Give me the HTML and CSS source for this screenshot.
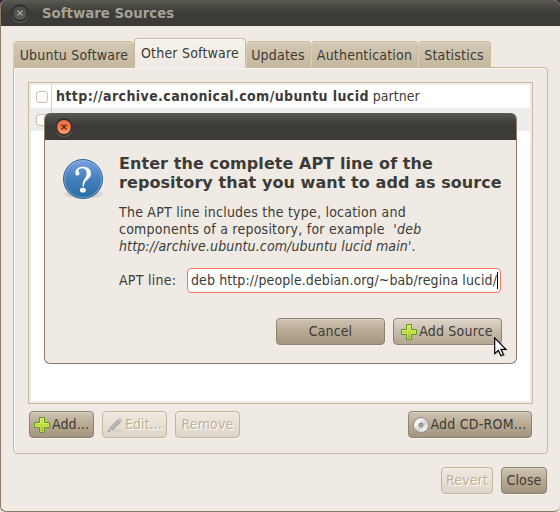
FILE: index.html
```html
<!DOCTYPE html>
<html lang="en">
<head>
<meta charset="utf-8">
<title>Software Sources</title>
<link rel="stylesheet" href="styles.css">
</head>
<body>
<svg class="defs" width="0" height="0" aria-hidden="true">
  <defs>
    <linearGradient id="green" x1="0" y1="0" x2="0" y2="1"><stop offset="0" stop-color="#d7e94e"/><stop offset=".5" stop-color="#c3dc3f"/><stop offset="1" stop-color="#8eb522"/></linearGradient>
    <linearGradient id="blue" x1="0" y1="0" x2="0" y2="1"><stop offset="0" stop-color="#7da2e0"/><stop offset=".5" stop-color="#447fbd"/><stop offset="1" stop-color="#286d9f"/></linearGradient>
    <linearGradient id="disc" x1="0" y1="0" x2="1" y2="1"><stop offset="0" stop-color="#c3c3c3"/><stop offset=".3" stop-color="#fafafa"/><stop offset=".55" stop-color="#cfcfcf"/><stop offset=".8" stop-color="#f6f6f6"/><stop offset="1" stop-color="#bcbcbc"/></linearGradient>
    <radialGradient id="shadow"><stop offset="0" stop-color="#8d8376" stop-opacity=".75"/><stop offset="1" stop-color="#8d8376" stop-opacity="0"/></radialGradient>
    <symbol id="plus" viewBox="0 0 16 16"><path d="M5.500.5h5v5h5v5h-5v5h-5v-5h-5v-5h5z" fill="url(#green)" stroke="#5f9b22"/><path d="M6.500 6.500v-5h3v5h5v3h-5v5h-3v-5h-5v-3z" fill="none" stroke="#e2f27a" stroke-opacity=".55"/></symbol>
  </defs>
</svg>
<div class="window">
  <div class="titlebar">
    <span class="close"><svg width="8" height="8" viewBox="0 0 8 8"><path d="M1.500 1.500l5 5m0-5l-5 5"/></svg></span>
    <span class="title">Software Sources</span>
  </div>
  <div class="body">
    <div class="tabs">
      <div class="tab t1"><span>Ubuntu Software</span></div>
      <div class="tab t2 active"><span>Other Software</span></div>
      <div class="tab t3"><span>Updates</span></div>
      <div class="tab t4"><span>Authentication</span></div>
      <div class="tab t5"><span>Statistics</span></div>
    </div>
    <div class="panel">
      <div class="list">
        <div class="row"><i class="check"></i><span class="cell"><b>http://archive.canonical.com/ubuntu lucid</b> partner</span></div>
        <div class="row alt"><i class="check"></i><span class="cell"></span></div>
      </div>
      <div class="actions">
        <button class="btn w65"><svg width="16" height="16"><use href="#plus"/></svg><span>Add...</span></button>
        <button class="btn w65 off"><svg width="16" height="16" viewBox="0 0 16 16"><ellipse cx="10" cy="13.500" rx="6" ry="1.500" fill="#d8d0c4"/><path d="M1 15l1.200-4.300L11.500 1.400Q12.500.4 14 1.500l.7.800q1 1.200 0 2.200L5.300 13.600z" fill="#c8c4bd"/><path d="M2.500 10.700L10.500 2.700l3 2.900-8 7.800z" fill="#aaa69f"/><path d="M4 11.500l7.500-7.500" stroke="#c6c2bb" stroke-width="1.200"/><path d="M.8 15.200l.5-1.900 1.400 1.400z" fill="#77736d"/></svg><span>Edit...</span></button>
        <button class="btn w65 off"><span>Remove</span></button>
        <button class="btn cd"><svg width="16" height="16" viewBox="0 0 16 16"><circle cx="8" cy="8" r="7.500" fill="url(#disc)" stroke="#8e8e8e"/><circle cx="8" cy="8" r="2" fill="#aaa49b" stroke="#777" stroke-width=".8"/></svg><span>Add CD-ROM...</span></button>
      </div>
    </div>
    <div class="footer">
      <button class="btn rev off"><span>Revert</span></button>
      <button class="btn cls"><span>Close</span></button>
    </div>
  </div>
</div>
<div class="dialog">
  <div class="titlebar">
    <span class="close hot"><svg width="8" height="8" viewBox="0 0 8 8"><path d="M1.500 1.500l5 5m0-5l-5 5"/></svg></span>
  </div>
  <div class="content">
    <svg class="question" width="46" height="46" viewBox="0 0 46 46">
      <ellipse cx="23" cy="37" rx="22" ry="5.500" fill="url(#shadow)"/>
      <circle cx="23" cy="22" r="19.500" fill="url(#blue)" stroke="#2e6899"/>
      <circle cx="23" cy="22" r="18.400" fill="none" stroke="#9dbce4" stroke-opacity=".55"/>
      <path d="M15.400 16.800C15 12.500 18.200 9.800 22.800 9.800c4.900 0 8.200 2.700 8.200 6.800 0 3.200-1.800 4.800-4 6.500-2 1.600-2.900 2.800-3 6.400h-1.400c-.2-4 .5-5.700 2.200-8 1.300-1.700 1.900-2.900 1.900-4.900 0-3.200-1.500-5.300-4.400-5.300-2.300 0-3.900 1.100-3.900 2.400 0 1.100 1.100 1.400 1.100 2.900 0 1.200-.8 2-2 2-1.300 0-2-.7-2.100-1.800z" fill="#fff"/>
      <ellipse cx="22.900" cy="33.200" rx="2.900" ry="2.400" fill="#fff"/>
    </svg>
    <div class="main">
      <div class="heading"><span>Enter the complete APT line of the</span><br><span>repository that you want to add as source</span></div>
      <div class="desc"><span>The APT line includes the type, location and</span><br><span>components of a repository, for example &nbsp;'<em>deb</em></span><br><span class="url"><em>http://archive.ubuntu.com/ubuntu lucid main</em>'.</span></div>
      <div class="field"><span class="label">APT line:</span><div class="input"><span class="value">deb http://people.debian.org/~bab/regina lucid/</span><i class="caret"></i></div></div>
      <div class="choices">
        <button class="btn w109"><span>Cancel</span></button>
        <button class="btn w109 hover"><svg width="16" height="16"><use href="#plus"/></svg><span>Add Source</span></button>
      </div>
    </div>
  </div>
</div>
<svg class="cursor" width="14" height="21" viewBox="0 0 14 21"><path d="M1.500 1v16l3.800-3.600 2.400 5.600 2.800-1.200-2.300-5.400h4.600z" fill="#777" opacity=".35" transform="translate(1 1)"/><path d="M.7.900v15.800l3.700-3.500 2.500 5.500 2.500-1.100-2.400-5.300h4.900z" fill="#fff" stroke="#000" stroke-width="1.200"/></svg>
</body>
</html>
```
FILE: styles.css
```css
* { box-sizing: border-box; }
body {
  margin: 0;
  width: 560px;
  height: 512px;
  overflow: hidden;
  background: linear-gradient(#4a2340 0 10px, #e9e3da 10px);
  color: #3c3b37;
  font: 14px/17px "DejaVu Sans Condensed", "DejaVu Sans", sans-serif;
  font-stretch: condensed;
}
.defs { position: absolute; }
span { white-space: pre; }
svg { flex: none; display: block; }
.window {
  width: 560px;
  height: 512px;
  background: #efeae3;
  border: 1px solid #8c7d66;
  border-top: 0;
  border-right: 0;
  border-radius: 6px;
  overflow: hidden;
}
.titlebar {
  display: flex;
  align-items: center;
  height: 26px;
  padding-left: 11px;
  background: linear-gradient(#5b5a53 0, #494843 6px, #3c3b37 13px);
}
.close {
  display: flex;
  align-items: center;
  justify-content: center;
  width: 16px;
  height: 16px;
  border-radius: 50%;
  background: linear-gradient(#4a4944, #5d5c56);
  border: 1px solid #292824;
  box-shadow: 0 0 0 1px #34332f, 0 1px 0 1px #65645d;
}
.close path { stroke: #aaa79e; fill: none; stroke-width: 1.1; }
.close.hot { background: linear-gradient(#ed7552, #f6723d 50%, #ffa478); }
.close.hot path { stroke: #542b1e; stroke-width: 1.4; }
.title {
  margin-left: 14px;
  font: bold 13.33px/17px "DejaVu Sans", sans-serif;
  font-stretch: normal;
  color: #a6a196;
}
.body { padding: 12px 12px 0; }
.tabs { display: flex; align-items: flex-end; height: 30px; margin-bottom: -1px; position: relative; letter-spacing: .2px; }
.tab {
  display: flex;
  align-items: center;
  justify-content: center;
  height: 27px;
  padding-top: 2px;
  padding-right: 1px;
  border: 1px solid #cabc9f;
  border-bottom-color: #c7b99d;
  border-left-color: #d9cebb;
  border-radius: 4px 4px 0 0;
  background: linear-gradient(#d3c8b4, #c5b89e);
  box-shadow: inset 0 1px #ddd3c1;
}
.tab.active {
  height: 30px;
  border-color: #c7b99d;
  border-bottom: 0;
  background: linear-gradient(#f5f2ec, #efeae3);
  box-shadow: inset 0 1px #fbf9f5;
  padding: 0 0 1px;
}
.t1 { width: 121px; padding-right: 0; padding-left: 1px; }
.t2 { width: 112px; }
.t3 { width: 65px; }
.t4 { width: 107px; padding-right: 0; }
.t5 { width: 73px; }
.panel {
  width: 535px;
  height: 387px;
  padding: 14px;
  border: 1px solid #c7b99d;
  border-radius: 0 4px 4px 4px;
  box-shadow: inset 1px 1px #f9f6f1;
}
.list {
  width: 505px;
  height: 322px;
  padding: 2px;
  border: 1px solid #c7b99d;
  background: #fff content-box;
}
.row { display: flex; align-items: center; height: 23px; }
.row.alt { background: #ededed; }
.row b { letter-spacing: .4px; }
.check {
  width: 12px;
  height: 12px;
  margin-left: 5px;
  border: 1px solid #cdc1ab;
  border-radius: 3px;
  background: #fff;
}
.cell { height: 23px; margin-left: 3px; padding-left: 4px; line-height: 23px; border-left: 1px solid #d0d0d0; }
.actions { display: flex; gap: 8px; margin-top: 7px; padding: 0 1px; }
.btn {
  display: flex;
  align-items: center;
  justify-content: center;
  height: 27px;
  padding: 0;
  border: 1px solid #908170;
  border-radius: 4px;
  background: linear-gradient(#cfc4b5, #b7a991 50%, #a39580);
  box-shadow: inset 0 1px rgba(255,255,255,.25), 0 1px #f7f4ef;
  color: #3c3b37;
  font: inherit;
  letter-spacing: .12px;
}
.btn.off {
  border-color: #c4b69c;
  background: linear-gradient(#efe9e1, #dfd6ca);
  color: #c1b193;
  text-shadow: 1px 1px #fff;
}
.btn.hover { background: linear-gradient(#ded6ca, #c7bbab 50%, #b5a68f); }
.w65 { width: 65px; }
.w109 { width: 109px; }
.hover span { margin-right: 1px; letter-spacing: .2px; }
.cd { width: 124px; margin-left: auto; }
.cd span { letter-spacing: .25px; }
.footer { display: flex; justify-content: flex-end; gap: 8px; margin-top: 13px; padding-right: 1px; }
.rev { width: 52px; }
.cls { width: 46px; }
.btn svg + span { margin-left: 2px; }
.btn.cd svg + span { margin-left: 1px; }
.dialog {
  position: absolute;
  left: 44px;
  top: 113px;
  width: 473px;
  height: 251px;
  overflow: hidden;
  background: #efeae3;
  border: 1px solid #8c7d66;
  border-top: 0;
  border-radius: 6px;
}
.dialog .titlebar { height: 27px; }
.content { display: flex; padding: 14px 14px 0 15px; }
.question { margin-top: 3px; }
.main { margin-left: 13px; width: 383px; }
.heading { font: bold 16px/19px "DejaVu Sans", sans-serif; font-stretch: normal; letter-spacing: .07px; }
.desc { margin-top: 12px; letter-spacing: .23px; }
.url { letter-spacing: .13px; }
.field { display: flex; align-items: center; margin-top: 12px; height: 26px; }
.label { width: 68px; letter-spacing: .25px; }
.value { letter-spacing: .1px; }
.input {
  display: flex;
  align-items: center;
  width: 314px;
  height: 25px;
  padding-left: 3px;
  background: #fff;
  border: 1px solid #f5765c;
  border-radius: 4px;
}
.caret { width: 1px; height: 17px; background: #000; }
.choices { display: flex; justify-content: flex-end; gap: 8px; margin-top: 25px; }
.cursor { position: absolute; left: 494px; top: 337px; }
```
